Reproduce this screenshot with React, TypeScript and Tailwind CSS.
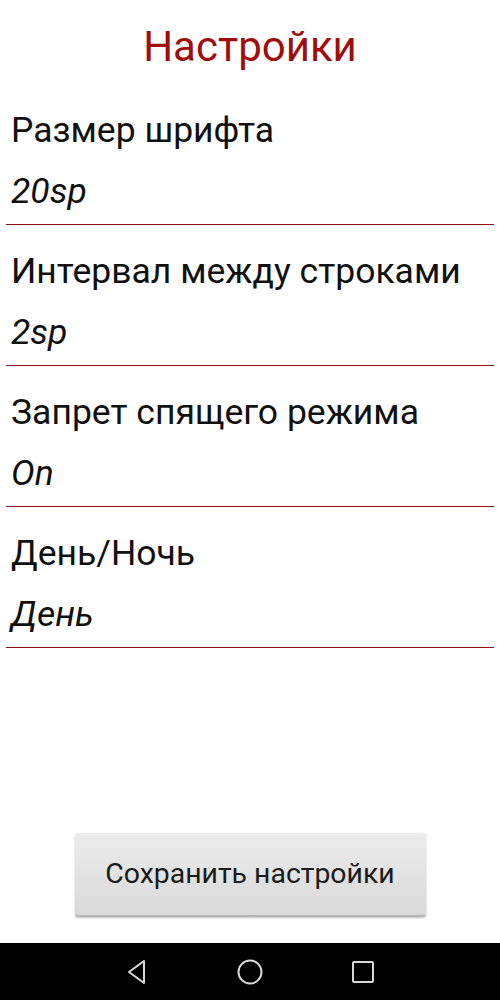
export default function App() {
  const items = [
    { label: "Размер шрифта", value: "20sp" },
    { label: "Интервал между строками", value: "2sp" },
    { label: "Запрет спящего режима", value: "On" },
    { label: "День/Ночь", value: "День" },
  ];

  return (
    <div
      className="h-[1000px] w-full bg-white flex flex-col"
      style={{ fontFamily: "Roboto, 'Noto Sans', sans-serif" }}
    >
      {/* Title */}
      <h1 className="pt-[9px] leading-[75px] text-[42px] text-center text-[#a00d0d] font-normal">
        Настройки
      </h1>

      {/* Settings list */}
      <div className="flex flex-col">
        {items.map((item) => (
          <div key={item.label} className="pt-4">
            <div className="px-[11px] text-[35.5px] leading-[61px] text-[#111]">{item.label}</div>
            <div className="px-[11px] text-[35.5px] leading-[61px] italic text-[#111]">{item.value}</div>
            <div className="mx-[6px] mt-[2px] h-px bg-[#8e1313]" />
          </div>
        ))}
      </div>

      <div className="flex-1" />

      {/* Save button */}
      <div className="flex justify-center pb-[26px]">
        <button className="w-[351px] h-[84px] rounded-[3px] bg-gradient-to-b from-[#ececec] to-[#d9d9d9] border-b-2 border-[#b8b8b8] shadow-[0_1px_2px_rgba(0,0,0,0.25)] text-[28.4px] text-[#1a1a1a]">
          Сохранить настройки
        </button>
      </div>

      {/* Navigation bar */}
      <div className="h-[57px] bg-black flex items-center justify-center gap-[88px]">
        <svg width="24" height="26" viewBox="0 0 24 26" fill="none" stroke="#d8d8d8" strokeWidth="2" strokeLinejoin="round">
          <path d="M19 2 L4 13 L19 24 Z" />
        </svg>
        <svg width="26" height="26" viewBox="0 0 26 26" fill="none" stroke="#d8d8d8" strokeWidth="2">
          <circle cx="13" cy="13" r="11.5" />
        </svg>
        <svg width="24" height="24" viewBox="0 0 24 24" fill="none" stroke="#d8d8d8" strokeWidth="2">
          <rect x="2" y="2" width="20" height="20" rx="1" />
        </svg>
      </div>
    </div>
  );
}
